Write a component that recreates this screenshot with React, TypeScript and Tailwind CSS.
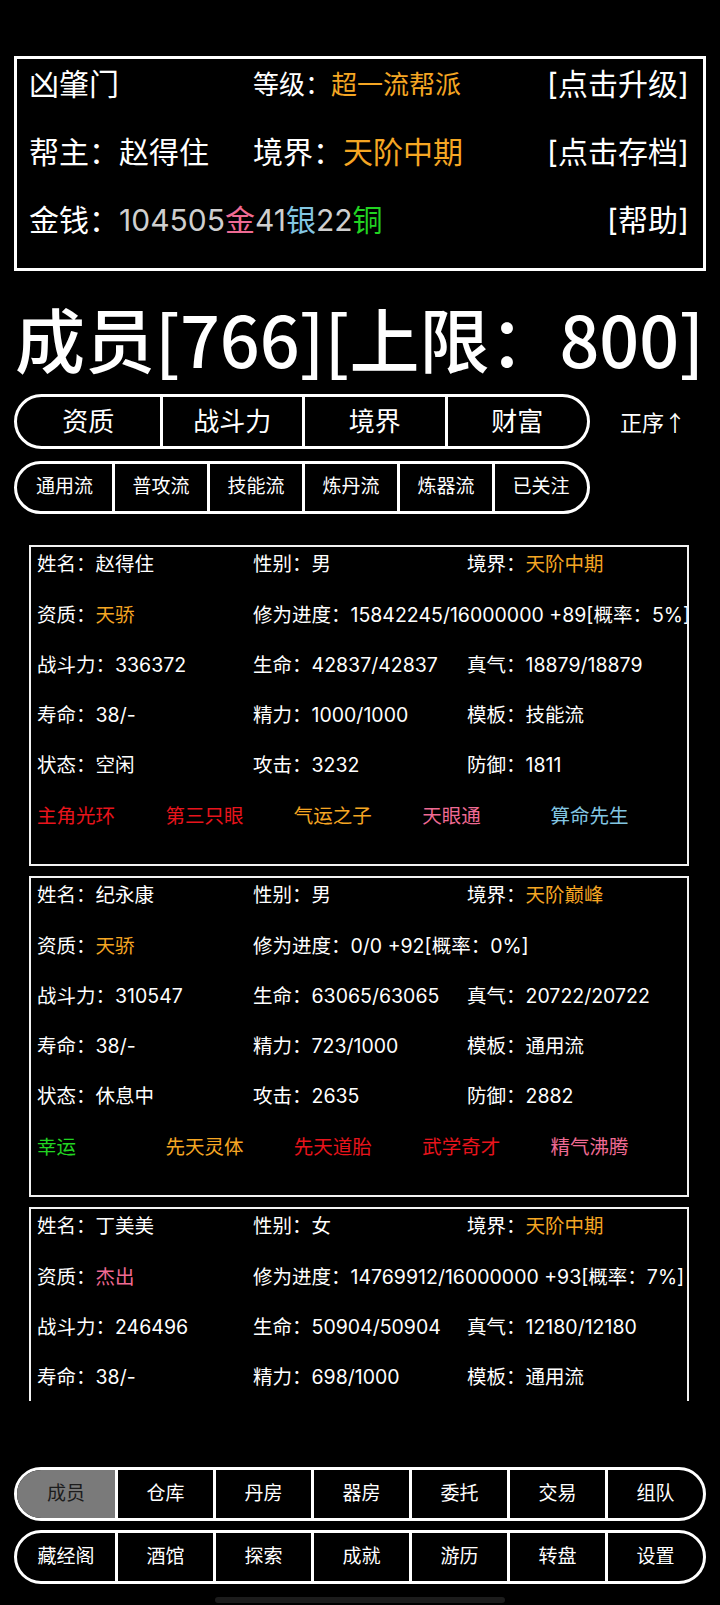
import type { ReactNode } from "react";

type Member = {
  name: string;
  gender: string;
  realm: string;
  talent: string;
  talentColor: string;
  progress: string;
  power: string;
  hp: string;
  qi: string;
  life: string;
  energy: string;
  template: string;
  status?: string;
  attack?: string;
  defense?: string;
  tags?: { text: string; color: string }[];
};

const ORANGE = "text-[#f5a623]";
const RED = "text-[#e8141c]";
const PINK = "text-[#ef6a93]";
const BLUE = "text-[#83c6e2]";
const GREEN = "text-[#22d422]";

const members: Member[] = [
  {
    name: "赵得住",
    gender: "男",
    realm: "天阶中期",
    talent: "天骄",
    talentColor: ORANGE,
    progress: "15842245/16000000 +89[概率：5%]",
    power: "336372",
    hp: "42837/42837",
    qi: "18879/18879",
    life: "38/-",
    energy: "1000/1000",
    template: "技能流",
    status: "空闲",
    attack: "3232",
    defense: "1811",
    tags: [
      { text: "主角光环", color: RED },
      { text: "第三只眼", color: RED },
      { text: "气运之子", color: ORANGE },
      { text: "天眼通", color: PINK },
      { text: "算命先生", color: BLUE },
    ],
  },
  {
    name: "纪永康",
    gender: "男",
    realm: "天阶巅峰",
    talent: "天骄",
    talentColor: ORANGE,
    progress: "0/0 +92[概率：0%]",
    power: "310547",
    hp: "63065/63065",
    qi: "20722/20722",
    life: "38/-",
    energy: "723/1000",
    template: "通用流",
    status: "休息中",
    attack: "2635",
    defense: "2882",
    tags: [
      { text: "幸运", color: GREEN },
      { text: "先天灵体", color: ORANGE },
      { text: "先天道胎", color: RED },
      { text: "武学奇才", color: RED },
      { text: "精气沸腾", color: PINK },
    ],
  },
  {
    name: "丁美美",
    gender: "女",
    realm: "天阶中期",
    talent: "杰出",
    talentColor: PINK,
    progress: "14769912/16000000 +93[概率：7%]",
    power: "246496",
    hp: "50904/50904",
    qi: "12180/12180",
    life: "38/-",
    energy: "698/1000",
    template: "通用流",
    status: "空闲",
    attack: "2410",
    defense: "1736",
    tags: [],
  },
];

const sortTabs = ["资质", "战斗力", "境界", "财富"];
const filterTabs = ["通用流", "普攻流", "技能流", "炼丹流", "炼器流", "已关注"];
const navTop = ["成员", "仓库", "丹房", "器房", "委托", "交易", "组队"];
const navBottom = ["藏经阁", "酒馆", "探索", "成就", "游历", "转盘", "设置"];

function Cell({ label, children }: { label: string; children: ReactNode }) {
  return (
    <div className="whitespace-nowrap">
      {label}：{children}
    </div>
  );
}

function MemberCard({ m }: { m: Member }) {
  return (
    <div className="h-[321px] shrink-0 overflow-hidden border-2 border-[#f2f2f2] pl-[6px] pt-[2px] text-[19.5px] leading-none text-white">
      <div className="grid grid-cols-[216px_214px_1fr] auto-rows-[32px] gap-y-[18.3px] items-center">
        <Cell label="姓名">{m.name}</Cell>
        <Cell label="性别">{m.gender}</Cell>
        <Cell label="境界">
          <span className={ORANGE}>{m.realm}</span>
        </Cell>

        <Cell label="资质">
          <span className={m.talentColor}>{m.talent}</span>
        </Cell>
        <div className="col-span-2 whitespace-nowrap">修为进度：{m.progress}</div>

        <Cell label="战斗力">{m.power}</Cell>
        <Cell label="生命">{m.hp}</Cell>
        <Cell label="真气">{m.qi}</Cell>

        <Cell label="寿命">{m.life}</Cell>
        <Cell label="精力">{m.energy}</Cell>
        <Cell label="模板">{m.template}</Cell>

        <Cell label="状态">{m.status}</Cell>
        <Cell label="攻击">{m.attack}</Cell>
        <Cell label="防御">{m.defense}</Cell>

        <div className="col-span-3 grid grid-cols-5 pr-[8px]">
          {m.tags?.map((t) => (
            <span key={t.text} className={`whitespace-nowrap ${t.color}`}>
              {t.text}
            </span>
          ))}
        </div>
      </div>
    </div>
  );
}

function NavRow({ items, active }: { items: string[]; active?: string }) {
  return (
    <div className="mx-[14px] grid h-[54px] grid-cols-7 overflow-hidden rounded-full border-[3px] border-white">
      {items.map((item, i) => (
        <div
          key={item}
          className={`flex items-center justify-center text-[19px] ${
            i > 0 ? "border-l-[3px] border-white" : ""
          } ${item === active ? "bg-[#7a7a7a] text-[#1c1c1c]" : "text-white"}`}
        >
          {item}
        </div>
      ))}
    </div>
  );
}

export default function App() {
  return (
    <div
      className="flex h-[1605px] w-[720px] flex-col overflow-hidden bg-black text-white"
      style={{ fontFamily: 'Inter, "Noto Sans CJK SC", sans-serif' }}
    >
      {/* guild info */}
      <div className="mx-[14px] mt-[56px] flex h-[215px] flex-col gap-[18px] border-[3px] border-white pl-[12px] pr-[14px]">
        <div className="flex h-[50px] items-center text-[30px]">
          <div className="w-[224px]">凶肇门</div>
          <div className="flex-1 text-[26px]">
            等级：<span className={ORANGE}>超一流帮派</span>
          </div>
          <div>[点击升级]</div>
        </div>
        <div className="flex h-[50px] items-center text-[30px]">
          <div className="w-[224px]">帮主：赵得住</div>
          <div className="flex-1">
            境界：<span className={ORANGE}>天阶中期</span>
          </div>
          <div>[点击存档]</div>
        </div>
        <div className="flex h-[50px] items-center text-[30px]">
          <div className="flex-1">
            金钱：<span className="text-[#cfcfcf]">104505</span>
            <span className={PINK}>金</span>
            <span className="text-[#cfcfcf]">41</span>
            <span className={BLUE}>银</span>
            <span className="text-[#cfcfcf]">22</span>
            <span className={GREEN}>铜</span>
          </div>
          <div>[帮助]</div>
        </div>
      </div>

      {/* title */}
      <div className="mt-[17px] flex h-[100px] items-center whitespace-nowrap pl-[15px] font-['Noto_Sans_CJK_SC',sans-serif] text-[70px] font-medium leading-none">
        成员[766][上限：800]
      </div>

      {/* sort tabs */}
      <div className="mt-[6px] flex h-[55px] items-center">
        <div className="ml-[14px] grid h-full w-[576px] grid-cols-4 overflow-hidden rounded-full border-[3px] border-white">
          {sortTabs.map((t, i) => (
            <div
              key={t}
              className={`flex items-center justify-center text-[26px] ${i > 0 ? "border-l-[3px] border-white" : ""}`}
            >
              {t}
            </div>
          ))}
        </div>
        <div className="ml-[30px] font-['Noto_Sans_CJK_SC',sans-serif] text-[22px]">正序↑</div>
      </div>

      <div className="ml-[14px] mt-[12px] grid h-[53px] w-[576px] grid-cols-6 overflow-hidden rounded-full border-[3px] border-white">
        {filterTabs.map((t, i) => (
          <div
            key={t}
            className={`flex items-center justify-center text-[19px] ${i > 0 ? "border-l-[3px] border-white" : ""}`}
          >
            {t}
          </div>
        ))}
      </div>

      {/* members list */}
      <div className="ml-[29px] mt-[31px] flex h-[856px] w-[660px] flex-col gap-[10px] overflow-hidden">
        {members.map((m) => (
          <MemberCard key={m.name} m={m} />
        ))}
      </div>

      {/* bottom nav */}
      <div className="mt-[66px]">
        <NavRow items={navTop} active="成员" />
      </div>
      <div className="mt-[9px]">
        <NavRow items={navBottom} />
      </div>

      <div className="mx-auto mt-[13px] h-[6px] w-[290px] rounded-full bg-[#1c1c1c]" />
    </div>
  );
}
